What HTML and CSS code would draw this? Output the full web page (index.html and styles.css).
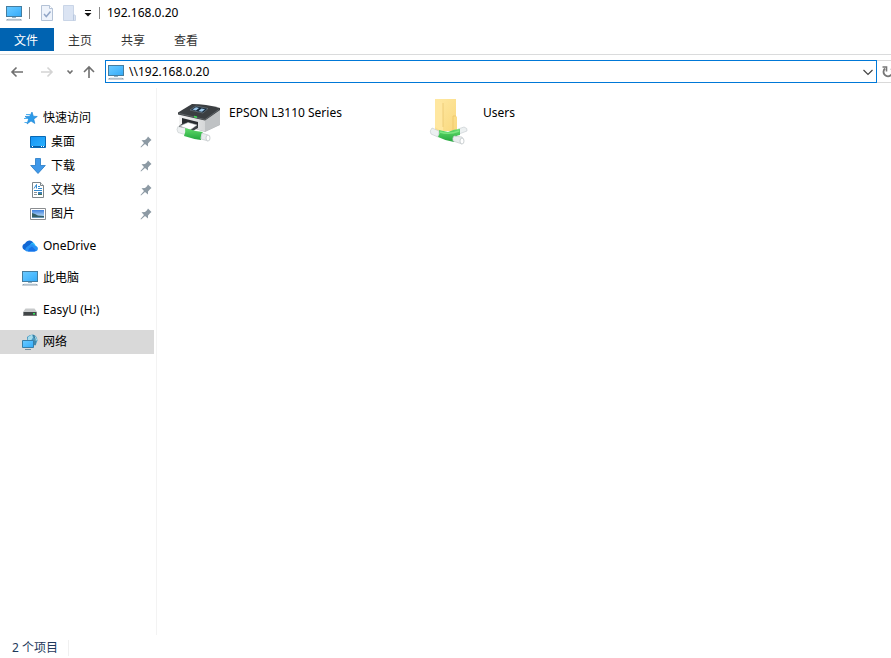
FILE: index.html
```html
<!DOCTYPE html>
<html lang="zh-CN">
<head>
<meta charset="utf-8">
<title>192.168.0.20</title>
<link rel="stylesheet" href="styles.css">
</head>
<body>
<svg class="defs" aria-hidden="true">
  <defs>
    <linearGradient id="screen" x1="0" y1="0" x2="1" y2="1"><stop offset="0" stop-color="#6bcaff"/><stop offset=".5" stop-color="#4fbcff"/><stop offset="1" stop-color="#33a9f5"/></linearGradient>
    <linearGradient id="desk" x1="0" y1="0" x2="1" y2="1"><stop offset="0" stop-color="#1593f5"/><stop offset="1" stop-color="#2cb4ff"/></linearGradient>
    <linearGradient id="sky" x1="0" y1="0" x2="0" y2="1"><stop offset="0" stop-color="#3c7fdc"/><stop offset="1" stop-color="#d9f2fc"/></linearGradient>
    <linearGradient id="cloud" x1="0" y1="0" x2="1" y2="1"><stop offset="0" stop-color="#28b4fa"/><stop offset="1" stop-color="#35cffc"/></linearGradient>
    <linearGradient id="fold" x1="0" y1="0" x2="1" y2="1"><stop offset="0" stop-color="#ffe9a3"/><stop offset="1" stop-color="#f9d87e"/></linearGradient>
    <linearGradient id="green" x1="0" y1="0" x2="0" y2="1"><stop offset="0" stop-color="#62dc6c"/><stop offset="1" stop-color="#22a63c"/></linearGradient>
    <linearGradient id="side" x1="0" y1="0" x2="1" y2="0"><stop offset="0" stop-color="#f4f4f4"/><stop offset="1" stop-color="#d5d7d8"/></linearGradient>
    <symbol id="monitor" viewBox="0 0 16 16">
      <rect x=".5" y="1.5" width="15" height="10" fill="url(#screen)" stroke="#457d9f"/>
      <path d="M6 12h4v1H6z" fill="#8fb1c7"/><path d="M1 14h14l1 1.500H0z" fill="#91a2b1"/><path d="M2 14h12" stroke="#d4e0e8"/>
    </symbol>
    <symbol id="pin" viewBox="0 0 12 12">
      <path d="M8 .5L11.500 4 10 5.200 8 7.500 8 10.500 5 8 1 11.500.500 11 4 7 1.500 4.300 5 4 7 2.200z" fill="#8d9aa4"/>
    </symbol>
  </defs>
</svg>
<div class="window">
  <header class="titlebar">
    <svg class="icon"><use href="#monitor"/></svg>
    <span class="divider"></span>
    <button class="quick" aria-label="属性">
      <svg class="icon" viewBox="0 0 16 16"><path d="M2.500.500h8l3 3v12h-11z" fill="#eef3fb" stroke="#b4c2d6"/><path d="M10.500.500v3h3" fill="#fff" stroke="#b4c2d6"/><path d="M5 9l2.300 2.500L11.500 6.500" fill="none" stroke="#92a6c7" stroke-width="1.500"/></svg>
    </button>
    <button class="quick" aria-label="新建文件夹">
      <svg class="icon" viewBox="0 0 16 16"><path d="M1.500.500h10v9l2 1v5h-12z" fill="#dbe4f3" stroke="#c9d5e7"/><path d="M11.500 9.500v6" stroke="#b9c8df"/></svg>
    </button>
    <button class="quick more" aria-label="自定义快速访问工具栏">
      <svg class="small" viewBox="0 0 8 8"><path d="M1 1.500h6" stroke="#111"/><path d="M.5 4h7L4 7.500z" fill="#111"/></svg>
    </button>
    <span class="divider"></span>
    <h1>192.168.0.20</h1>
  </header>
  <nav class="tabs" aria-label="功能区">
    <button class="tab file">文件</button>
    <button class="tab">主页</button>
    <button class="tab">共享</button>
    <button class="tab">查看</button>
  </nav>
  <div class="addressbar">
    <div class="history">
      <button class="quick" aria-label="后退"><svg class="icon" viewBox="0 0 16 16"><path d="M14 8H3M7.500 3.500L3 8l4.500 4.500" class="arrow"/></svg></button>
      <button class="quick" aria-label="前进" disabled><svg class="icon" viewBox="0 0 16 16"><path d="M2 8h11M8.500 3.500L13 8l-4.500 4.500" class="arrow faint"/></svg></button>
      <button class="quick recent" aria-label="最近位置"><svg class="small" viewBox="0 0 8 8"><path d="M1.500 2.500L4 5l2.500-2.500" class="arrow"/></svg></button>
      <button class="quick" aria-label="向上"><svg class="icon" viewBox="0 0 16 16"><path d="M8 14V3M3 8l5-5 5 5" class="arrow"/></svg></button>
    </div>
    <div class="location">
      <svg class="icon"><use href="#monitor"/></svg>
      <input type="text" aria-label="地址" value="\\192.168.0.20">
      <button class="quick" aria-label="展开地址"><svg class="icon" viewBox="0 0 16 16"><path d="M3.500 6L8 10.500 12.500 6" fill="none" stroke="#444" stroke-width="1.200"/></svg></button>
    </div>
    <button class="refresh" aria-label="刷新"><svg class="icon" viewBox="0 0 16 16"><path d="M5 4.500A4.500 4.500 0 1 0 11 4.500" fill="none" stroke="#777" stroke-width="1.800"/><path d="M2.500 3h4v4.500" fill="none" stroke="#777" stroke-width="1.600"/></svg></button>
  </div>
  <div class="body">
    <nav class="sidebar" aria-label="导航窗格">
      <div class="group">
        <a class="item" href="#"><svg class="icon" viewBox="0 0 16 16"><path d="M10 2l1.300 4.200 4 .3-3.500 2.500 1 4.500L9 11l-4 3 1.500-4.800L3 6.500l4.700-.3z" fill="#2c9bea" stroke="#1680d0" stroke-width=".6"/><path d="M4 4.500h4M2 8.500h4M2.500 12.500H5" stroke="#51b0f0"/></svg><span>快速访问</span></a>
        <a class="item child" href="#"><svg class="icon" viewBox="0 0 16 16"><path d="M.5 2.500h15v11H.5z" fill="url(#desk)" stroke="#0869b5"/><path d="M1 12.500h14" stroke="#075da6"/><path d="M2 12.500h1m8 0h1m1 0h1" stroke="#fff"/></svg><span>桌面</span><svg class="pin"><use href="#pin"/></svg></a>
        <a class="item child" href="#"><svg class="icon" viewBox="0 0 16 16"><path d="M5.500.500h5v7h4.800L8 15.500.700 7.500h4.800z" fill="#3f98e9" stroke="#2478c4" stroke-width=".8"/></svg><span>下载</span><svg class="pin"><use href="#pin"/></svg></a>
        <a class="item child" href="#"><svg class="icon" viewBox="0 0 16 16"><path d="M2.500.500h8l3 3v12h-11z" fill="#fff" stroke="#7d8589"/><path d="M10.500.500v3h3" fill="#eee" stroke="#7d8589"/><path d="M4 6.500L6.500 2.500v4M8 4.500h2M8 6.500h4M4 8.500h8" stroke="#338bd0" fill="none"/><path d="M4 10.500h3m-3 2h3" stroke="#8b9398"/><path d="M8 10h4v3H8z" fill="#3e80b4"/><path d="M8 12h4v1H8z" fill="#3f6d53"/></svg><span>文档</span><svg class="pin"><use href="#pin"/></svg></a>
        <a class="item child" href="#"><svg class="icon" viewBox="0 0 16 16"><path d="M.5 2.500h15v11H.5z" fill="#fff" stroke="#8a8d90"/><path d="M2 4h12v8H2z" fill="url(#sky)"/><path d="M2 7l3 1 3 1.500 6 .5v2H2z" fill="#345f66"/><path d="M2 11h12v1H2z" fill="#6694b3"/></svg><span>图片</span><svg class="pin"><use href="#pin"/></svg></a>
      </div>
      <a class="item" href="#"><svg class="icon" viewBox="0 0 16 16"><path d="M3.500 12.500C-.5 11.500-.5 6.500 3 5.500 5 1.500 10 1.500 11.500 5l-5 5z" fill="#1268d4"/><path d="M7 8L10 4.500q2.500 0 3.500 3l2 2.500-2.500 2z" fill="url(#cloud)"/><path d="M3 12q.5-2.500 3-4l3-1.500q2-1.500 3.500 1C17 8 17 13.500 12.500 13.500H5.500Q4 13.500 3 12z" fill="#2792f4"/><path d="M7 10.500l3-2 4 4-1.500 1H6z" fill="#1672e9"/></svg><span>OneDrive</span></a>
      <a class="item" href="#"><svg class="icon"><use href="#monitor"/></svg><span>此电脑</span></a>
      <a class="item" href="#"><svg class="icon" viewBox="0 0 16 16"><path d="M3.500 6.500h9L15 10v4H1v-4z" fill="#c8cacb"/><path d="M1.500 10h13v4h-13z" fill="#414648"/><path d="M2 13.500h12" stroke="#777"/><path d="M11 11h2v1.500h-2z" fill="#35e85b"/></svg><span>EasyU (H:)</span></a>
      <a class="item selected" href="#" aria-current="page"><svg class="icon" viewBox="0 0 16 16"><path d="M5 3Q7 .5 11 .5q4 1 4.500 6l-2 5-8-2z" fill="#4b9bc3"/><path d="M6 3l4-2.500 1 3-2 3H6zm7-1l2.500 4L13 7l-1-3z" fill="#a7dcec"/><path d="M11.500 1L13 5v6" fill="none" stroke="#387794"/><path d="M.5 6.500h11v7H.5z" fill="url(#screen)" stroke="#377ea9"/><path d="M3 15.500h6" stroke="#758d9d"/></svg><span>网络</span></a>
    </nav>
    <main class="content">
      <a class="tile" href="#">
        <svg class="large" viewBox="0 0 48 48">
          <path d="M4 15v11l26 8 15-7V11z" fill="#b4b7b9"/>
          <path d="M4 16l26 6v11.500L4 26z" fill="url(#side)"/><path d="M30 22l15-10v14.500l-15 7z" fill="#bfc2c4"/>
          <path d="M3 14.500L17 6q14 0 28 4v2L30 22.500 3 16.500z" fill="#3b3f42"/><path d="M4 15.500l26 6 14-10" fill="none" stroke="#6c7175" stroke-width=".7"/>
          <path d="M15 12l6-4 12 2.500-5 4.500z" fill="#172c3e" stroke="#7a858c" stroke-width=".6"/><path d="M17.500 11.500l3.500-2.300 3 .8-3 2.400zm6 1.500l3-2.600 3.500.8-3 2.600z" fill="#9cc6e8"/>
          <path d="M19 18.500l3 .7" stroke="#43df56" stroke-width="1.500"/>
          <path d="M7 20l16 4v6L7 26z" fill="#292d30"/><path d="M4 28l4-3 15 3v2l-7 4-12-4z" fill="#3b4043"/><path d="M5 28l8-3.500 9 2.500-7 5z" fill="#fff" stroke="#bfc4c7" stroke-width=".5"/>
          <path d="M3 28.500l9 2-2 6-7-2q-2-3 0-6z" fill="#edf0f1" stroke="#c5cbcd" stroke-width=".6"/>
          <path d="M10 30q9 3 18 4-3 3-2 8-8-1-17-4 2-4 1-8z" fill="url(#green)"/>
          <path d="M27 35l6 2q3 3 0 6l-7-2z" fill="#e8eced" stroke="#bdc3c6" stroke-width=".6"/><ellipse cx="33" cy="40" rx="2" ry="3" fill="#fff" stroke="#bfc5c8" stroke-width=".8"/>
        </svg>
        <span>EPSON L3110 Series</span>
      </a>
      <a class="tile" href="#">
        <svg class="large" viewBox="0 0 48 48">
          <path d="M6 1h21v17l1 1v14H6z" fill="url(#fold)"/><path d="M6 1l8 4v29l-8-5z" fill="#ffe7a0"/><path d="M14 5v24" stroke="#eac66e" stroke-width=".8"/><path d="M24 18v14M24 18h3" stroke="#edc568" stroke-width=".8"/>
          <path d="M3 30l7 3-1 6-7-3q-2-3 1-6z" fill="#ecf0f1" stroke="#c3cacc" stroke-width=".6"/>
          <path d="M29 31l6-2q4 1 3 4l-8 3z" fill="#ecf0f1" stroke="#c3cacc" stroke-width=".6"/>
          <path d="M10 32l9 2q6-3 12-3v6q-3 0-4 2l-2 5q-8-1-16-5 2-3 1-7z" fill="url(#green)"/><path d="M11 34q9 3 19-1" fill="none" stroke="#7ce681" stroke-width="1.500"/>
          <path d="M25 38l8 1q3 3 0 7l-9-3q-1-3 1-5z" fill="#e8eced" stroke="#bdc3c6" stroke-width=".6"/><ellipse cx="33" cy="43" rx="2" ry="3" fill="#fff" stroke="#bfc5c8" stroke-width=".8"/>
        </svg>
        <span>Users</span>
      </a>
    </main>
  </div>
  <footer class="status"><span>2 个项目</span></footer>
</div>
</body>
</html>
```
FILE: styles.css
```css
* {
  box-sizing: border-box;
}

body {
  margin: 0;
  background: #fff;
  color: #000;
  font: 12px/16px "Noto Sans", "Noto Sans CJK SC", sans-serif;
}

button,
input {
  margin: 0;
  padding: 0;
  border: 0;
  background: transparent;
  color: inherit;
  font: inherit;
}

a {
  color: inherit;
  text-decoration: none;
}

.defs {
  display: block;
  width: 0;
  height: 0;
}

.icon {
  display: block;
  flex: none;
  width: 16px;
  height: 16px;
}

.small {
  display: block;
  width: 8px;
  height: 8px;
}

.window {
  display: flex;
  flex-direction: column;
  min-height: 100vh;
  overflow: hidden;
}

.titlebar {
  display: flex;
  align-items: center;
  height: 28px;
  padding: 0 6px 2px;
}

.titlebar h1 {
  margin: 0 0 0 7px;
  font-size: 12px;
  font-weight: 400;
}

.divider {
  width: 1px;
  height: 12px;
  margin: 0 0 0 7px;
  background: #888;
}

.titlebar .quick {
  margin-left: 7px;
}

.titlebar .more {
  margin-left: 6px;
}

.titlebar .divider + .quick {
  margin-left: 9px;
}

.tabs {
  display: flex;
  height: 27px;
  padding-bottom: 3px;
  border-bottom: 1px solid #dadbdc;
}

.tab {
  width: 53px;
  height: 23px;
  padding: 2px 1px 0 0;
  color: #333;
}

.tab.file {
  width: 54px;
  padding-right: 2px;
  background: #0063b1;
  color: #fff;
}

.addressbar {
  display: flex;
  align-items: center;
  height: 33px;
}

.history {
  display: flex;
  flex: none;
  align-items: center;
  gap: 14px;
  width: 105px;
  padding-left: 9px;
}

.history .recent {
  margin: 0 -7px 0 -3px;
}

.arrow {
  fill: none;
  stroke: #707070;
  stroke-width: 1.6;
}

.arrow.faint {
  stroke: #d4d4d4;
}

.location {
  display: flex;
  flex: 1;
  align-items: center;
  height: 23px;
  padding: 0 0 0 2px;
  border: 1px solid #0078d7;
}

.location input {
  flex: 1;
  min-width: 0;
  margin-left: 5px;
  outline: 0;
}

.refresh {
  flex: none;
  width: 14px;
  height: 23px;
  padding-left: 3px;
  overflow: hidden;
  border: solid #d9d9d9;
  border-width: 1px 0;
}

.body {
  display: flex;
  flex: 1;
}

.sidebar {
  display: flex;
  flex: none;
  flex-direction: column;
  gap: 8px;
  width: 157px;
  padding: 18px 2px 0 0;
  border-right: 1px solid #f3f3f3;
}

.item {
  display: flex;
  align-items: center;
  gap: 5px;
  height: 24px;
  padding-left: 22px;
}

.item.child {
  padding-left: 30px;
}

.item.selected {
  background: #d9d9d9;
}

.pin {
  width: 12px;
  height: 12px;
  margin-left: auto;
  margin-right: 2px;
}

.content {
  display: flex;
  flex: 1;
  flex-wrap: wrap;
  align-content: flex-start;
  padding: 10px 0 0 18px;
}

.tile {
  display: flex;
  gap: 6px;
  width: 254px;
  height: 48px;
}

.tile span {
  padding-top: 7px;
}

.large {
  flex: none;
  width: 48px;
  height: 48px;
}

.status {
  display: flex;
  align-items: center;
  height: 23px;
  padding: 2px 0 0 12px;
  color: #1e395b;
}

.status span {
  padding-right: 10px;
  border-right: 1px solid #f0f0f0;
}
```
